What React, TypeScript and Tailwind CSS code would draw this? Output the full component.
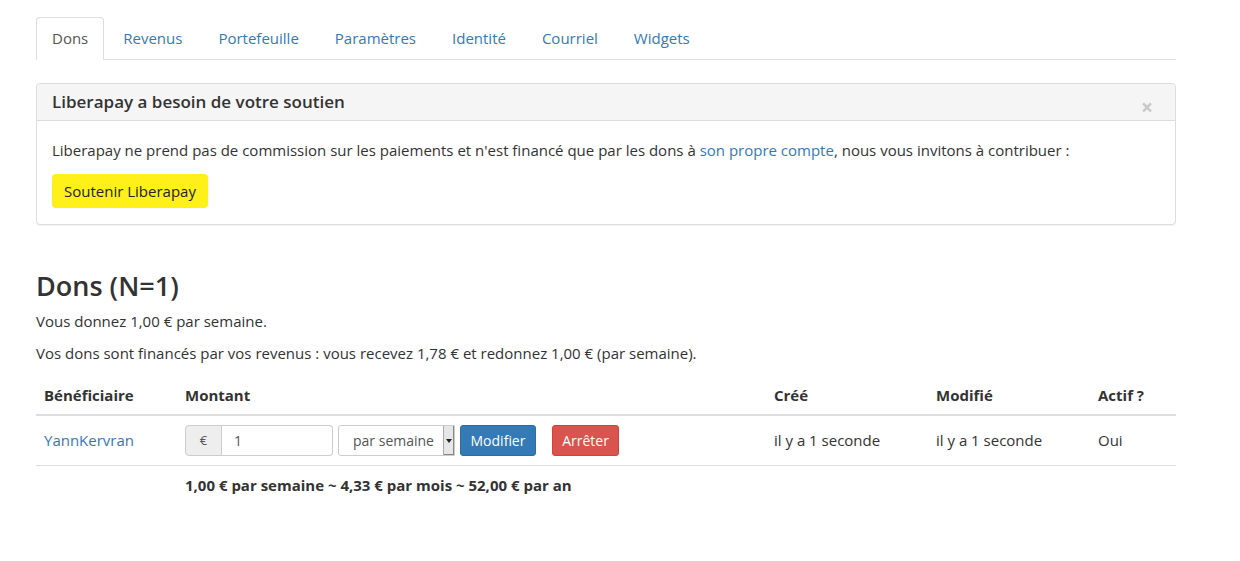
import React from 'react'

const tabs = ['Dons', 'Revenus', 'Portefeuille', 'Paramètres', 'Identité', 'Courriel', 'Widgets']

function Tabs() {
  return (
    <ul className="flex border-b border-[#ddd]">
      {tabs.map((t, i) => (
        <li key={t} className="-mb-px mr-[2px]">
          {i === 0 ? (
            <span className="block rounded-t border border-[#ddd] border-b-white bg-white px-[15px] py-[10px] leading-[21px] text-[#555]">
              {t}
            </span>
          ) : (
            <a href="#" className="block border border-transparent px-[16px] py-[10px] leading-[21px] text-[#337ab7]">
              {t}
            </a>
          )}
        </li>
      ))}
    </ul>
  )
}

function SupportPanel() {
  return (
    <div className="mt-[23px] rounded border border-[#ddd] bg-white shadow-[0_1px_1px_rgba(0,0,0,0.05)]">
      <div className="flex items-center justify-between rounded-t border-b border-[#ddd] bg-[#f5f5f5] px-[15px] py-[9px]">
        <h3 className="text-[17px] font-semibold leading-[18px] text-[#333]">Liberapay a besoin de votre soutien</h3>
        <span className="relative top-[5px] mr-[7px] text-[21px] font-bold leading-[18px] text-[#c8c8c8]">×</span>
      </div>
      <div className="px-[15px] pt-[18px] pb-[16px]">
        <p className="leading-[22px]">
          Liberapay ne prend pas de commission sur les paiements et n'est financé que par les dons à{' '}
          <a href="#" className="text-[#337ab7]">son propre compte</a>, nous vous invitons à contribuer :
        </p>
        <button className="mt-[13px] rounded bg-[#fff01a] px-[12px] py-[6px] leading-[22px] text-[#222]">
          Soutenir Liberapay
        </button>
      </div>
    </div>
  )
}

function DonationsTable() {
  return (
    <table className="mt-[12px] w-full border-collapse text-left">
      <thead>
        <tr className="border-b-2 border-[#ddd]">
          <th className="w-[141px] px-[8px] py-[8px] font-bold leading-[22px]">Bénéficiaire</th>
          <th className="w-[589px] px-[8px] py-[8px] font-bold leading-[22px]">Montant</th>
          <th className="w-[162px] px-[8px] py-[8px] font-bold leading-[22px]">Créé</th>
          <th className="w-[162px] px-[8px] py-[8px] font-bold leading-[22px]">Modifié</th>
          <th className="px-[8px] py-[8px] font-bold leading-[22px]">Actif ?</th>
        </tr>
      </thead>
      <tbody>
        <tr className="border-b border-[#ddd]">
          <td className="px-[8px] py-[9px] align-middle">
            <a href="#" className="text-[#337ab7]">YannKervran</a>
          </td>
          <td className="px-[8px] py-[9px] align-middle">
            <div className="flex items-center">
              <div className="flex h-[31px] w-[148px]">
                <span className="flex w-[37px] items-center justify-center rounded-l border border-[#ccc] bg-[#eee] text-[13px] text-[#555]">
                  €
                </span>
                <input
                  defaultValue="1"
                  className="w-[111px] rounded-r border border-l-0 border-[#ccc] bg-white px-[12px] text-[14px] text-[#555] outline-none"
                />
              </div>
              <div className="ml-[5px] flex h-[31px] w-[117px] items-center rounded-l-[3px] border border-[#ccc] bg-white">
                <span className="flex-1 pl-[14px] text-[14px] text-[#555]">par semaine</span>
                <span className="flex h-full w-[11px] items-center justify-center border-l border-[#aaa] bg-[#e6e6e6] shadow-[inset_-1px_-1px_0_#888]">
                  <span className="h-0 w-0 border-x-[3px] border-t-[4px] border-x-transparent border-t-[#222]" />
                </span>
              </div>
              <button className="ml-[5px] h-[31px] w-[76px] rounded-[3px] border border-[#2e6da4] bg-[#337ab7] text-[14px] text-white">
                Modifier
              </button>
              <button className="ml-[16px] h-[31px] w-[67px] rounded-[3px] border border-[#d43f3a] bg-[#d9534f] text-[14px] text-white">
                Arrêter
              </button>
            </div>
          </td>
          <td className="px-[8px] py-[9px] align-middle">il y a 1 seconde</td>
          <td className="px-[8px] py-[9px] align-middle">il y a 1 seconde</td>
          <td className="px-[8px] py-[9px] align-middle">Oui</td>
        </tr>
        <tr>
          <td className="px-[8px] py-[8px]" />
          <td colSpan={4} className="px-[8px] py-[8px] font-bold leading-[22px]">
            1,00 € par semaine ~ 4,33 € par mois ~ 52,00 € par an
          </td>
        </tr>
      </tbody>
    </table>
  )
}

export default function App() {
  return (
    <div className="min-h-[561px] bg-white font-['Open_Sans',sans-serif] text-[15px] text-[#333]">
      <div className="ml-[36px] w-[1140px] pt-[17px]">
        <Tabs />
        <SupportPanel />
        <h1 className="mt-[46px] mb-[10px] text-[27px] font-semibold leading-[29px] text-[#333]">Dons (N=1)</h1>
        <p className="mb-[10px] leading-[22px]">Vous donnez 1,00 € par semaine.</p>
        <p className="mb-[10px] leading-[22px]">
          Vos dons sont financés par vos revenus : vous recevez 1,78 € et redonnez 1,00 € (par semaine).
        </p>
        <DonationsTable />
      </div>
    </div>
  )
}
